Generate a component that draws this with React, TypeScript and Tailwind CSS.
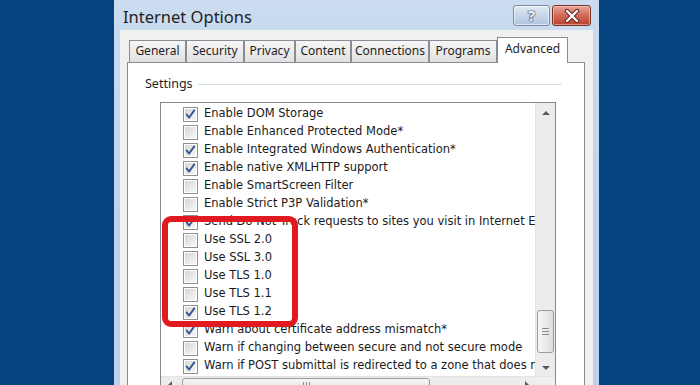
import React from "react";

const rows: [string, boolean][] = [
  ["Enable DOM Storage", true],
  ["Enable Enhanced Protected Mode*", false],
  ["Enable Integrated Windows Authentication*", true],
  ["Enable native XMLHTTP support", true],
  ["Enable SmartScreen Filter", false],
  ["Enable Strict P3P Validation*", false],
  ["Send Do Not Track requests to sites you visit in Internet Explorer*", true],
  ["Use SSL 2.0", false],
  ["Use SSL 3.0", false],
  ["Use TLS 1.0", false],
  ["Use TLS 1.1", false],
  ["Use TLS 1.2", true],
  ["Warn about certificate address mismatch*", true],
  ["Warn if changing between secure and not secure mode", false],
  ["Warn if POST submittal is redirected to a zone that does not permit posts", true],
];

const tabs: [string, string][] = [
  ["General", "w-[57px]"],
  ["Security", "w-[58px]"],
  ["Privacy", "w-[51px]"],
  ["Content", "w-[56px]"],
  ["Connections", "w-[78px]"],
  ["Programs", "w-[68px]"],
];

function CheckBox({ checked }: { checked: boolean }) {
  return (
    <div className="relative w-[15px] h-[15px] border border-[#8e8f8f] bg-white p-px shrink-0">
      <div className="w-full h-full bg-gradient-to-br from-[#d6d6d6] to-[#f8f8f8]" />
      {checked && (
        <svg width="15" height="15" viewBox="0 0 15 15" className="absolute left-[-1px] top-[-1px]">
          <path
            d="M3.6 7.4 L6.1 10.6 L11.2 3.4"
            fill="none"
            stroke="#3d5591"
            strokeWidth="1.9"
            strokeLinecap="round"
            strokeLinejoin="round"
          />
        </svg>
      )}
    </div>
  );
}

function Tri({ dir }: { dir: "up" | "down" | "left" | "right" }) {
  const pts =
    dir === "up"
      ? "0,5 4,1 8,5"
      : dir === "down"
      ? "0,1 8,1 4,5"
      : dir === "left"
      ? "5,0 5,8 1,4"
      : "1,0 1,8 5,4";
  const w = dir === "up" || dir === "down" ? 8 : 6;
  const h = dir === "up" || dir === "down" ? 6 : 8;
  return (
    <svg width={w} height={h} viewBox={`0 0 ${w} ${h}`}>
      <polygon points={pts} fill="#5a5a5a" />
    </svg>
  );
}

export default function App() {
  return (
    <div className="relative w-[700px] h-[385px] overflow-hidden bg-[#03437f] flex font-['Noto_Sans',sans-serif]">
      {/* Window */}
      <div className="ml-[114px] w-[485px] h-[430px] flex flex-col bg-gradient-to-b from-[#cbdcf0] via-[#bed3ea] to-[#bcd3ec]">
        {/* Title bar */}
        <div className="h-[30px] flex items-start justify-between pl-[9px] pr-[8px] shrink-0">
          <div className="pt-[5px] text-[16.5px] leading-[24px] text-[#1e1e1e]">Internet Options</div>
          <div className="flex gap-[2px] pt-[5px]">
            <div className="w-[37px] h-[21px] rounded-[3px] border border-[#7a8ca6] bg-gradient-to-b from-[#e2ebf5] via-[#c6d6ea] to-[#aec4e0] flex items-center justify-center shadow-[inset_0_0_0_1px_rgba(255,255,255,0.6)]">
              <span className="text-[15px] leading-none font-bold text-[#f4f6fa] [text-shadow:0_0_1px_#334,0_0_1px_#334,0_0_2px_#556]">?</span>
            </div>
            <div className="w-[39px] h-[21px] rounded-[3px] border border-[#7d3024] bg-gradient-to-b from-[#e7a597] via-[#d06a57] to-[#b9402b] flex items-center justify-center shadow-[inset_0_0_0_1px_rgba(255,220,210,0.5)]">
              <svg width="16" height="14" viewBox="0 0 16 14">
                <path d="M3 2 L13 12 M13 2 L3 12" stroke="#5a2018" strokeWidth="4.2" strokeLinecap="round" />
                <path d="M3 2 L13 12 M13 2 L3 12" stroke="#ffffff" strokeWidth="2.4" strokeLinecap="round" />
              </svg>
            </div>
          </div>
        </div>

        {/* Client area */}
        <div className="mx-[6px] flex-1 bg-[#f0f0f0] pt-[7px] flex flex-col">
          {/* Tabs */}
          <div className="h-[25px] flex items-end pl-[9px] text-[12px] text-[#1e1e1e]">
            {tabs.map(([t, w]) => (
              <div
                key={t}
                className={`${w} h-[22px] border border-b-0 border-[#898c95] bg-gradient-to-b from-[#f6f6f6] to-[#e1e1e1] flex items-center justify-center leading-none pb-[1px]`}
              >
                {t}
              </div>
            ))}
            <div className="relative z-10 -mb-px w-[71px] h-[26px] border border-b-0 border-[#898c95] bg-white flex justify-center pt-[3px] leading-[16px]">
              Advanced
            </div>
          </div>

          {/* Panel */}
          <div className="ml-[7px] w-[458px] flex-1 border border-[#898c95] bg-white flex flex-col">
            <div className="mt-[13px] h-[16px] flex items-center pl-[17px]">
              <span className="text-[12.5px] leading-none text-[#1e1e1e]">Settings</span>
              <div className="flex-1 h-px bg-[#d5dfe5] ml-[5px] mr-[22px]" />
            </div>

            {/* List box */}
            <div className="ml-[32px] mt-[10px] w-[396px] h-[300px] border border-[#828790] bg-white flex flex-col">
              <div className="flex h-[273px]">
                <div className="flex-1 overflow-hidden pt-[2px] font-['DejaVu_Sans',sans-serif] text-[11.5px] text-[#1a1a1a]">
                  {rows.map(([label, checked]) => (
                    <div key={label} className="h-[18px] flex items-center pl-[22px] gap-[6px] whitespace-nowrap">
                      <CheckBox checked={checked} />
                      <span className="leading-none">{label}</span>
                    </div>
                  ))}
                </div>
                {/* Vertical scrollbar */}
                <div className="w-[20px] bg-[#ececec] border-l border-[#e4e4e4] flex flex-col">
                  <div className="h-[17px] flex items-center justify-center pt-[2px]">
                    <Tri dir="up" />
                  </div>
                  <div className="flex-1 flex flex-col">
                    <div className="mt-[190px] mx-[1px] h-[43px] rounded-[3px] border border-[#9b9b9b] bg-gradient-to-r from-[#f7f7f7] to-[#dedede] flex flex-col items-center justify-center gap-[2px]">
                      <div className="w-[7px] h-px bg-[#8a8a8a]" />
                      <div className="w-[7px] h-px bg-[#8a8a8a]" />
                      <div className="w-[7px] h-px bg-[#8a8a8a]" />
                    </div>
                  </div>
                  <div className="h-[17px] flex items-center justify-center">
                    <Tri dir="down" />
                  </div>
                </div>
              </div>
              {/* Horizontal scrollbar */}
              <div className="h-[17px] flex bg-[#ececec] border-t border-[#e4e4e4]">
                <div className="w-[18px] flex items-center justify-center">
                  <Tri dir="left" />
                </div>
                <div className="flex-1 flex">
                  <div className="w-[248px] my-[1px] ml-[3px] rounded-[3px] border border-[#9b9b9b] bg-gradient-to-b from-[#f7f7f7] to-[#dedede] flex items-center justify-center gap-[2px]">
                    <div className="w-px h-[7px] bg-[#8a8a8a]" />
                    <div className="w-px h-[7px] bg-[#8a8a8a]" />
                    <div className="w-px h-[7px] bg-[#8a8a8a]" />
                  </div>
                </div>
                <div className="w-[17px] flex items-center justify-center">
                  <Tri dir="right" />
                </div>
                <div className="w-[20px] bg-[#f0f0f0]" />
              </div>
            </div>
          </div>
          <div className="h-[8px]" />
        </div>
      </div>

      {/* Red highlight */}
      <div className="absolute left-[162px] top-[216px] w-[136px] h-[111px] border-[6px] border-[#e11a21] rounded-[9px]" />
    </div>
  );
}
